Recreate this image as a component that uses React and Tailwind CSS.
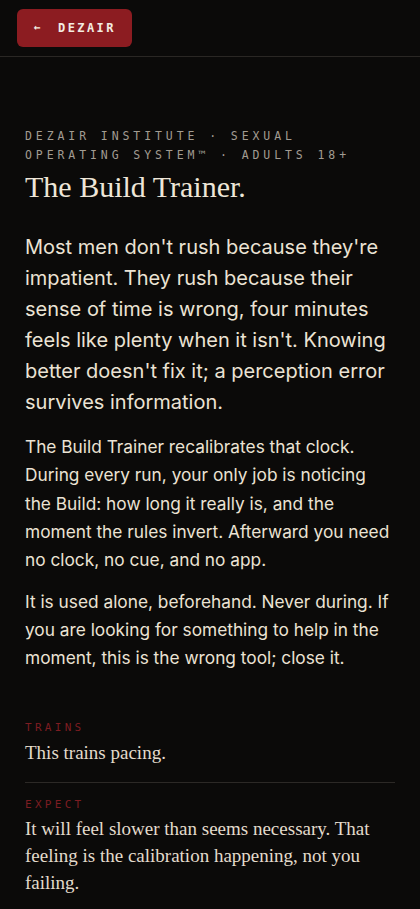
import React from 'react';

const mono = { fontFamily: '"DejaVu Sans Mono", "Liberation Mono", monospace' };
const serif = { fontFamily: '"Liberation Serif", "DejaVu Serif", serif' };
const sans = { fontFamily: 'Inter, "Noto Sans", sans-serif' };

const notes = [
  { label: 'TRAINS', text: 'This trains pacing.' },
  { label: 'EXPECT', text: 'It will feel slower than seems necessary. That feeling is the calibration happening, not you failing.' },
];

export default function App() {
  return (
    <div className="min-h-screen bg-[#0b0a09] text-[#e9e1d2]" style={sans}>
      {/* top bar */}
      <header className="h-[57px] border-b border-[#2a2724] px-[17px] pt-[9px]">
        <button
          className="flex h-[38px] w-[115px] items-center gap-[15px] rounded-[6px] bg-[#8c1c21] pl-[17px] text-[12px] font-bold tracking-[0.2em] text-[#f3ece2]"
          style={mono}
        >
          <span className="text-[11px]">←</span>
          <span>DEZAIR</span>
        </button>
      </header>

      <main className="px-[25px] pt-[70px] pb-10">
        <p className="text-[11.5px] leading-[18.5px] tracking-[0.34em] text-[#a29c92]" style={mono}>
          DEZAIR INSTITUTE · SEXUAL OPERATING SYSTEM™ · ADULTS 18+
        </p>
        <h1 className="mt-[3px] text-[30px] leading-[40px] text-[#eee6d8]" style={serif}>
          The Build Trainer.
        </h1>

        <div className="-mr-[2px]">
          <p className="mt-[25px] text-[20px] leading-[31px] text-[#ebe3d4]">
            Most men don't rush because they're impatient. They rush because their sense of time is wrong, four minutes feels like plenty when it isn't. Knowing better doesn't fix it; a perception error survives information.
          </p>
          <p className="mt-[15px] max-w-[365px] text-[17.3px] leading-[28.3px] text-[#ebe3d4]">
            The Build Trainer recalibrates that clock. During every run, your only job is noticing the Build: how long it really is, and the moment the rules invert. Afterward you need no clock, no cue, and no app.
          </p>
          <p className="mt-[14px] text-[17.3px] leading-[28px] text-[#ebe3d4]">
            It is used alone, beforehand. Never during. If you are looking for something to help in the moment, this is the wrong tool; close it.
          </p>
        </div>

        <div className="mt-[48px]">
          {notes.map((n, i) => (
            <div key={n.label} className={i > 0 ? 'border-t border-[#2c2926] pt-[14px]' : 'pb-[16px]'}>
              <div className="text-[11px] leading-[16px] tracking-[0.3em] text-[#7d1d22]" style={mono}>
                {n.label}
              </div>
              <div className={`${i > 0 ? 'mt-[2px]' : 'mt-[3px]'} text-[19px] leading-[27px] text-[#e3dbcc]`} style={serif}>
                {n.text}
              </div>
            </div>
          ))}
        </div>
      </main>
    </div>
  );
}
